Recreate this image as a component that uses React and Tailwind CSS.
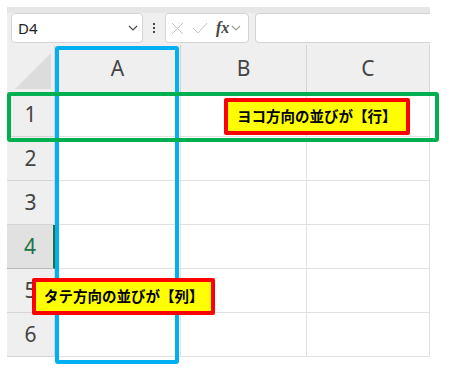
import React from 'react';

const rows = ['1', '2', '3', '4', '5', '6'];
const cols = ['A', 'B', 'C'];

// Formula bar icons
const Chevron = ({ className }) => (
  <svg className={className} width="10" height="6" viewBox="0 0 10 6" fill="none">
    <path d="M1 1l4 4 4-4" stroke="currentColor" strokeWidth="1.1" />
  </svg>
);

const Toolbar = () => (
  <div className="h-[38px] bg-[#efefef] border-t-[6px] border-[#e6e6e6] flex items-start pl-[4px]">
    <div className="w-[132px] h-[30px] bg-white border border-[#d4d4d4] rounded-[4px] flex items-center justify-between pl-[6px] pr-[4px] text-[15px] text-[#222]">
      <span>D4</span>
      <Chevron className="text-[#444]" />
    </div>
    <div className="w-[22px] h-[30px] flex flex-col items-center justify-center gap-[2px]">
      <span className="w-[2px] h-[2px] bg-[#444]" />
      <span className="w-[2px] h-[2px] bg-[#444]" />
      <span className="w-[2px] h-[2px] bg-[#444]" />
    </div>
    <div className="w-[84px] h-[30px] bg-white border border-[#d4d4d4] rounded-[4px] flex items-center pl-[5px] gap-[8px]">
      <svg width="13" height="13" viewBox="0 0 13 13" fill="none">
        <path d="M1 1l11 11M12 1L1 12" stroke="#c4c4c4" strokeWidth="1" />
      </svg>
      <svg width="16" height="12" viewBox="0 0 16 12" fill="none">
        <path d="M1 6l5 5L15 1" stroke="#c4c4c4" strokeWidth="1" />
      </svg>
      <div className="flex items-center gap-[2px]">
        <span className="text-[16px] italic font-bold text-[#444] leading-none" style={{ fontFamily: '"Liberation Serif", serif' }}>fx</span>
        <Chevron className="text-[#999]" />
      </div>
    </div>
    <div className="ml-[6px] flex-1 h-[30px] bg-white border border-[#d4d4d4] border-r-0 rounded-l-[4px]" />
  </div>
);

const App = () => {
  return (
    <div className="w-[453px] h-[374px] bg-white relative overflow-hidden" style={{ fontFamily: '"Noto Sans", "Noto Sans CJK JP", sans-serif' }}>
      <div className="pt-[7px] pl-[7px] w-[430px]">
        <Toolbar />

        {/* Grid */}
        <div className="grid grid-cols-[48px_126px_126px_123px] text-[#444]">
          {/* Header row */}
          <div className="h-[48px] bg-[#efefef] border-r border-b border-[#d4d4d4] flex items-end justify-end p-[3px]">
            <svg width="36" height="36" viewBox="0 0 36 36">
              <path d="M36 0V36H0Z" fill="#dcdcdc" />
            </svg>
          </div>
          {cols.map((c) => (
            <div key={c} className="h-[48px] bg-[#efefef] border-r border-b border-[#d4d4d4] flex items-center justify-center text-[21px]">
              {c}
            </div>
          ))}

          {/* Body rows */}
          {rows.map((r) => (
            <React.Fragment key={r}>
              <div
                className={
                  r === '4'
                    ? 'h-[44px] bg-[#e1e1e1] border-r-2 border-r-[#217346] border-b border-b-[#b8b8b8] flex items-center justify-center text-[21px] text-[#217346]'
                    : 'h-[44px] bg-[#efefef] border-r border-b border-[#d4d4d4] flex items-center justify-center text-[21px]'
                }
              >
                {r}
              </div>
              {cols.map((c) => (
                <div key={c} className="h-[44px] bg-white border-r border-b border-[#e1e1e1]" />
              ))}
            </React.Fragment>
          ))}
        </div>
      </div>

      {/* Column highlight */}
      <div className="absolute left-[55px] top-[46px] w-[124px] h-[318px] border-4 border-[#00b0f0] rounded-[3px]" />

      {/* Row highlight */}
      <div className="absolute left-[7px] top-[92px] w-[432px] h-[50px] border-4 border-[#00b050] rounded-[3px]" />

      {/* Labels */}
      <div className="absolute left-[224px] top-[98px] w-[186px] h-[37px] bg-[#ffff00] border-4 border-[#ff0000] rounded-[2px] flex items-center pl-[9px] text-[14.5px] font-bold text-black">
        ヨコ方向の並びが【行】
      </div>
      <div className="absolute left-[32px] top-[278px] w-[183px] h-[37px] bg-[#ffff00] border-4 border-[#ff0000] rounded-[2px] flex items-center pl-[8px] text-[14.5px] font-bold text-black">
        タテ方向の並びが【列】
      </div>
    </div>
  );
};

export default App;
